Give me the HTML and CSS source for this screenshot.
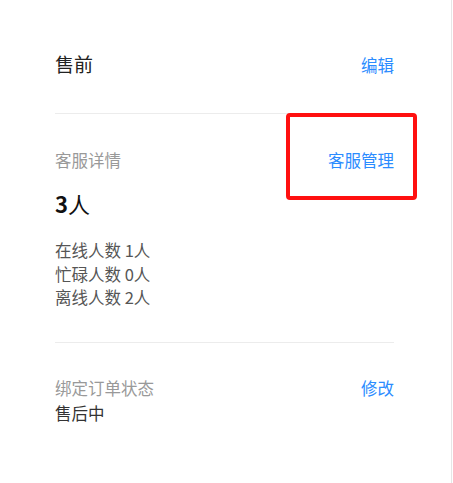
FILE: index.html
```html
<!DOCTYPE html>
<html lang="zh-CN">
<head>
  <meta charset="UTF-8" />
  <meta name="viewport" content="width=device-width, initial-scale=1.0"/>
  <title>售前</title>
  <link rel="stylesheet" href="styles.css">
</head>
<body>

<div class="panel">

  <!-- 标题 -->
  <div class="panel__head">
    <span class="panel__title">售前</span>
    <a href="#" class="link">编辑</a>
  </div>

  <!-- 客服详情 -->
  <div class="panel__section section--staff">
    <div class="row">
      <span class="label">客服详情</span>
      <a href="#" class="link">客服管理</a>
    </div>
    <div class="total"><b>3</b>人</div>
    <ul class="stats">
      <li>在线人数 1人</li>
      <li>忙碌人数 0人</li>
      <li>离线人数 2人</li>
    </ul>
    <div class="mark"></div>
  </div>

  <!-- 绑定订单状态 -->
  <div class="panel__section section--order">
    <div class="row">
      <span class="label">绑定订单状态</span>
      <a href="#" class="link">修改</a>
    </div>
    <div class="value">售后中</div>
  </div>

</div>

</body>
</html>
```

FILE: styles.css
```css
* {
  margin: 0;
  padding: 0;
  box-sizing: border-box;
}

body {
  background: #fff;
  font-family: "Noto Sans CJK SC", "Noto Sans", sans-serif;
  font-size: 16.5px;
  color: #333;
}

.panel {
  width: 452px;
  height: 483px;
  padding: 0 57px 0 55px;
  border-right: 1px solid #e6e6e6;
}

.panel__head {
  display: flex;
  justify-content: space-between;
  align-items: baseline;
  padding-top: 52px;
  height: 114px;
  border-bottom: 1px solid #ececec;
}

.panel__title {
  font-size: 19px;
  line-height: 24px;
  color: #222;
}

.link {
  color: #2b8cff;
  text-decoration: none;
  line-height: 24px;
}

.panel__section {
  position: relative;
}

.section--staff {
  padding-top: 34px;
  height: 229px;
  border-bottom: 1px solid #ececec;
}

.section--order {
  padding-top: 33px;
}

.row {
  display: flex;
  justify-content: space-between;
  align-items: baseline;
  line-height: 24px;
}

.label {
  color: #999;
}

.total {
  margin-top: 16px;
  font-size: 22px;
  line-height: 30px;
  color: #111;
}

.total b {
  font-weight: bold;
}

.stats {
  list-style: none;
  margin-top: 21px;
  color: #555;
  line-height: 23.5px;
}

.value {
  margin-top: 1px;
  color: #333;
  line-height: 24px;
}

/* 标注框 */
.mark {
  position: absolute;
  top: -1px;
  left: 231px;
  width: 131px;
  height: 87px;
  border: 4px solid #ff1010;
  border-radius: 4px;
}
```
